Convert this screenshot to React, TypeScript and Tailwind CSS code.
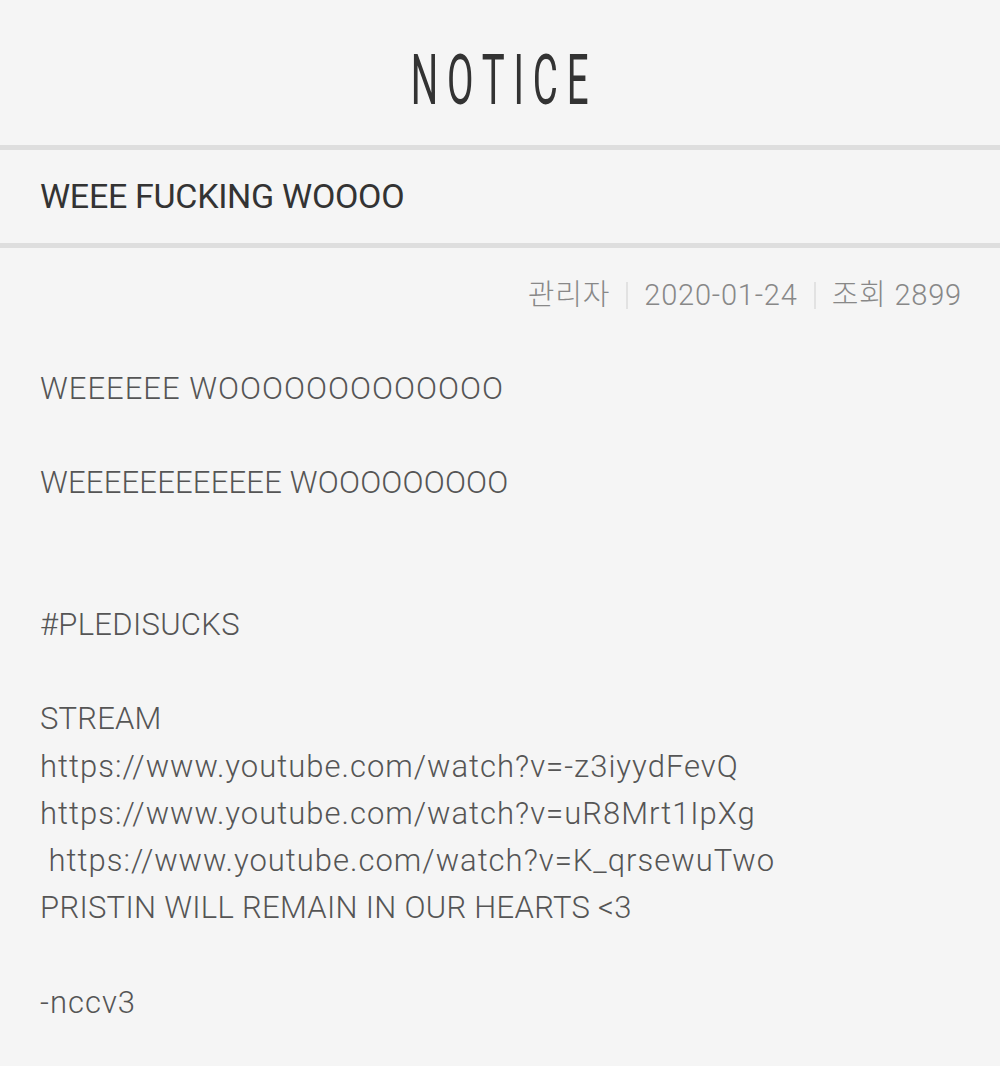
import React from 'react';

type Line = { text: string; cls?: string };

const bodyLines: Line[] = [
  { text: 'WEEEEEE WOOOOOOOOOOOOO', cls: 'tracking-[1px]' },
  { text: '' },
  { text: 'WEEEEEEEEEEEE WOOOOOOOOO', cls: 'tracking-[0.2px]' },
  { text: '' },
  { text: '' },
  { text: '#PLEDISUCKS', cls: 'tracking-[0.3px]' },
  { text: '' },
  { text: 'STREAM', cls: 'tracking-[0.2px]' },
  { text: 'https://www.youtube.com/watch?v=-z3iyydFevQ', cls: 'tracking-[1px]' },
  { text: 'https://www.youtube.com/watch?v=uR8Mrt1IpXg', cls: 'tracking-[1px]' },
  { text: ' https://www.youtube.com/watch?v=K_qrsewuTwo', cls: 'tracking-[1px]' },
  { text: 'PRISTIN WILL REMAIN IN OUR HEARTS <3', cls: 'tracking-[0.3px]' },
  { text: '' },
  { text: '-nccv3', cls: 'tracking-[1px]' },
];

const Sep = () => <span className="mx-[16px] h-[27px] w-[2px] self-center bg-[#e2e2e2]" />;

export default function App() {
  return (
    <div className="min-h-[1066px] w-[1000px] bg-[#f5f5f5] font-['Roboto','Noto_Sans_CJK_KR',sans-serif]">
      <header className="flex h-[145px] items-center justify-center pt-[14px]">
        <h1 className="inline-block scale-x-[0.55] pl-[16px] text-[70px] font-normal leading-none tracking-[16px] text-[#333]">
          NOTICE
        </h1>
      </header>
      <div className="h-[5px] bg-[#dedede]" />
      <div className="flex h-[93px] items-center px-10">
        <h2 className="text-[34px] font-normal tracking-[-0.3px] text-[#333]">WEEE FUCKING WOOOO</h2>
      </div>
      <div className="h-[5px] bg-[#dedede]" />
      <div className="flex justify-end px-[38px] pt-[26px] text-[29px] font-light tracking-[0.8px] text-[#888]">
        <span>관리자</span>
        <Sep />
        <span>2020-01-24</span>
        <Sep />
        <span>조회 2899</span>
      </div>
      <div className="px-10 pt-[47px] text-[31px] font-light leading-[47.25px] text-[#555]">
        {bodyLines.map((l, i) => (
          <div key={i} className={`h-[47.25px] whitespace-pre ${l.cls ?? ''}`}>
            {l.text}
          </div>
        ))}
      </div>
    </div>
  );
}
